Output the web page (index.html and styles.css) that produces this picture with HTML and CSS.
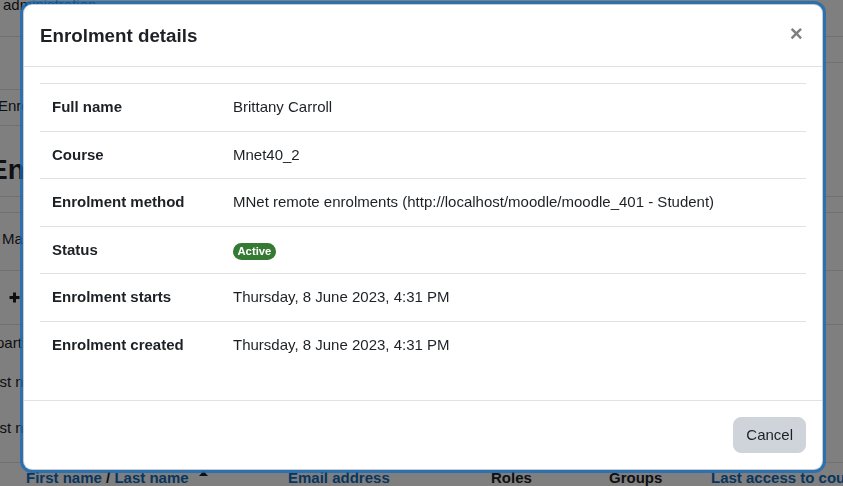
FILE: index.html
```html
<!DOCTYPE html>
<html lang="en">
<head>
    <meta charset="UTF-8">
    <meta name="viewport" content="width=device-width, initial-scale=1.0">
    <title>Enrolment details</title>
    <link rel="stylesheet" href="styles.css">
</head>
<body>
    <div class="page">
        <div class="row-nav"><span class="crumb">administration</span></div>
        <div class="row-sub"><div class="aside"></div></div>
        <div class="row-tabs"><div class="tab">Enrolled users</div></div>
        <div class="row-heading"><h2>Enrolled users</h2></div>
        <div class="row-band"></div>
        <div class="row-match"><span class="match">Match</span></div>
        <div class="row-add">
            <svg class="plus" width="11" height="11" viewBox="0 0 11 11"><path d="M5.5 0.5v10M0.5 5.5h10" stroke="#1d2125" stroke-width="3"/></svg>
        </div>
        <div class="row-filter">
            <span class="parti">participants</span>
            <span class="initial first">First name</span>
            <span class="initial second">First name</span>
        </div>
        <div class="row-head">
            <span class="col-name"><a>First name</a> / <a>Last name</a>
                <svg class="caret" width="9" height="5" viewBox="0 0 9 5"><path d="M0 5L4.5 0L9 5Z" fill="#1d2125"/></svg>
            </span>
            <span class="col-email"><a>Email address</a></span>
            <span class="col-roles">Roles</span>
            <span class="col-groups">Groups</span>
            <span class="col-access"><a>Last access to course</a></span>
        </div>
    </div>

    <div class="backdrop"></div>
    <div class="modal">
        <div class="modal-dialog">
            <div class="modal-content">
                <div class="modal-header">
                    <h5 class="modal-title">Enrolment details</h5>
                    <button class="close">&times;</button>
                </div>
                <div class="modal-body">
                    <table class="details">
                        <tr><th>Full name</th><td>Brittany Carroll</td></tr>
                        <tr><th>Course</th><td>Mnet40_2</td></tr>
                        <tr><th>Enrolment method</th><td>MNet remote enrolments (http://localhost/moodle/moodle_401 - Student)</td></tr>
                        <tr><th>Status</th><td><span class="badge">Active</span></td></tr>
                        <tr><th>Enrolment starts</th><td>Thursday, 8 June 2023, 4:31 PM</td></tr>
                        <tr><th>Enrolment created</th><td>Thursday, 8 June 2023, 4:31 PM</td></tr>
                    </table>
                </div>
                <div class="modal-footer">
                    <button class="btn-secondary">Cancel</button>
                </div>
            </div>
        </div>
    </div>
</body>
</html>
```

FILE: styles.css
```css
* {
    box-sizing: border-box;
}
body {
    margin: 0;
    font-family: "Liberation Sans", Arial, sans-serif;
    font-size: 15px;
    line-height: 1.5;
    color: #1d2125;
    background: #fff;
    overflow: hidden;
    height: 486px;
}
.page {
    width: 843px;
}
.row-nav {
    height: 37px;
    border-bottom: 1px solid #dee2e6;
    overflow: hidden;
}
.crumb {
    display: block;
    margin-top: -6px;
    padding-left: 3px;
}
.row-sub {
    height: 52px;
    display: flex;
    justify-content: flex-end;
}
.row-sub .aside {
    width: 160px;
    height: 26px;
    border-bottom: 1px solid #dee2e6;
}
.row-tabs {
    height: 37px;
}
.tab {
    width: 140px;
    height: 37px;
    border-top: 1px solid #dee2e6;
    border-bottom: 1px solid #dee2e6;
    margin-left: -2px;
    padding-top: 5px;
    white-space: nowrap;
}
.row-heading {
    height: 71px;
    border-bottom: 1px solid #dee2e6;
    padding-top: 27px;
    overflow: hidden;
}
.row-heading h2 {
    margin: 0 0 0 -11px;
    font-size: 28px;
    line-height: 1.2;
    font-weight: bold;
    white-space: nowrap;
}
.row-band {
    height: 16px;
    border-bottom: 1px solid #dee2e6;
}
.row-match {
    height: 58px;
    border-bottom: 1px solid #dee2e6;
    padding: 15px 0 0 2px;
}
.row-add {
    height: 54px;
    border-bottom: 1px solid #dee2e6;
    padding: 21px 0 0 9px;
}
.plus {
    display: block;
}
.row-filter {
    height: 138px;
    border-bottom: 1px solid #dee2e6;
    display: flex;
    flex-direction: column;
    align-items: flex-start;
    padding-top: 7px;
}
.parti {
    margin-left: -4px;
}
.initial {
    margin-left: -18px;
}
.first {
    margin-top: 16px;
}
.second {
    margin-top: 24px;
}
.row-head {
    height: 23px;
    display: grid;
    grid-template-columns: 262px 203px 118px 102px 1fr;
    padding: 4px 0 0 26px;
    font-weight: bold;
    white-space: nowrap;
}
.row-head a {
    color: #0f6cbf;
}
.caret {
    margin-left: 6px;
    vertical-align: 7px;
}

.backdrop {
    position: fixed;
    inset: 0;
    background: rgba(0, 0, 0, 0.5);
}
.modal {
    position: fixed;
    inset: 0;
    overflow: hidden;
}
.modal-dialog {
    width: 800px;
    margin: 4px 0 0 23px;
}
.modal-content {
    background: #fff;
    border: 1px solid rgba(0, 0, 0, 0.2);
    border-radius: 9px;
    box-shadow: 0 0 0 3px rgba(15, 108, 191, 0.75);
}
.modal-header {
    display: flex;
    align-items: center;
    padding: 19.5px 16px 19px 16px;
    border-bottom: 1px solid #dee2e6;
}
.modal-title {
    margin: 0;
    font-size: 18.75px;
    line-height: 1.2;
    font-weight: bold;
}
.close {
    margin: -3px 0 0 auto;
    padding: 0 3px 0 0;
    border: none;
    background: none;
    font-family: "Liberation Sans", Arial, sans-serif;
    font-size: 22.5px;
    font-weight: bold;
    line-height: 1;
    color: #000;
    opacity: 0.5;
}
.modal-body {
    padding: 16px;
}
.details {
    width: 100%;
    border-collapse: collapse;
    margin-bottom: 16px;
}
.details th,
.details td {
    padding: 12px;
    border-top: 1px solid #dee2e6;
    text-align: left;
    vertical-align: top;
}
.details th {
    width: 181px;
    font-weight: bold;
}
.badge {
    display: inline-block;
    padding: 0.25em 0.4em;
    font-size: 11.25px;
    font-weight: bold;
    line-height: 1;
    border-radius: 10rem;
    background: #357a32;
    color: #fff;
}
.modal-footer {
    display: flex;
    justify-content: flex-end;
    padding: 16px;
    border-top: 1px solid #dee2e6;
}
.btn-secondary {
    padding: 6px 12px;
    border: 1px solid #ced4da;
    border-radius: 8px;
    background: #ced4da;
    color: #1d2125;
    font-family: "Liberation Sans", Arial, sans-serif;
    font-size: 15px;
    line-height: 21.5px;
}
```
